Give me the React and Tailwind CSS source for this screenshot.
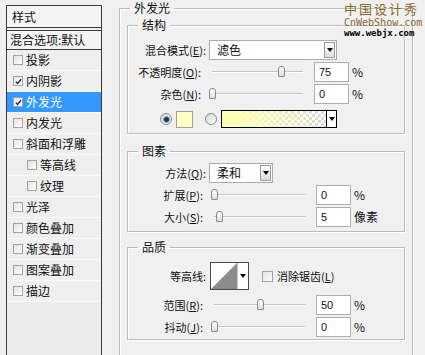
import React from "react";

const styles = [
  { label: "投影" },
  { label: "内阴影", checked: true },
  { label: "外发光", checked: true, selected: true },
  { label: "内发光" },
  { label: "斜面和浮雕" },
  { label: "等高线", sub: true },
  { label: "纹理", sub: true },
  { label: "光泽" },
  { label: "颜色叠加" },
  { label: "渐变叠加" },
  { label: "图案叠加" },
  { label: "描边" },
];

function Check({ checked, size = "h-[10px] w-[10px]" }) {
  return (
    <span className={`flex shrink-0 items-center justify-center border border-[#a2a2a2] bg-linear-to-br from-[#e2e2e2] to-white ${size}`}>
      {checked && (
        <svg viewBox="0 0 8 8" className="h-[7px] w-[7px]">
          <path d="M1 4.2 L3 6.3 L7 1.5" stroke="#1e2a5a" strokeWidth="1.6" fill="none" />
        </svg>
      )}
    </span>
  );
}

function Arrow() {
  return (
    <svg viewBox="0 0 6 4" className="h-[4px] w-[6px]">
      <path d="M0 0 H6 L3 4 Z" fill="#000" />
    </svg>
  );
}

function Select({ value, className }) {
  return (
    <div className={`flex h-[20px] items-center border border-[#a5acb5] bg-white ${className}`}>
      <span className="flex-1 pl-[7px] text-[12px] leading-none">{value}</span>
      <span className="mr-[1px] flex h-[16px] w-[11px] items-center justify-center border border-[#9a9a9a] bg-linear-to-b from-white to-[#dcdcdc]">
        <Arrow />
      </span>
    </div>
  );
}

function Slider({ pos }) {
  return (
    <div className="relative ml-[8px] flex h-[20px] w-[97px] items-center px-[3px]">
      <div className="h-[2px] flex-1 border-b border-white bg-[#c4c4c4]" />
      <span
        className="absolute top-[4px] h-[11px] w-[7px] rounded-t-[3px] rounded-b-[1px] border border-[#8a8a8a] bg-linear-to-b from-white to-[#dedede]"
        style={{ left: `${3 + pos * 92 - 3}px` }}
      />
    </div>
  );
}

function SliderRow({ label, value, unit = "%", pos, labelW = "w-[75px]", className = "" }) {
  return (
    <div className={`flex h-[20px] items-center ${className}`}>
      <span className={`${labelW} shrink-0 text-right text-[11px] leading-none`}>{label}</span>
      <Slider pos={pos} />
      <span className="ml-[8px] flex h-[20px] w-[35px] items-center border border-[#abadb3] bg-white pl-[4px] font-['Liberation_Sans',sans-serif] text-[11px]">
        {value}
      </span>
      <span className="ml-[3px] leading-none">{unit}</span>
    </div>
  );
}

function Radio({ on }) {
  return (
    <span className="flex h-[12px] w-[12px] shrink-0 items-center justify-center rounded-full border border-[#8a8a8a] bg-linear-to-br from-[#d6d6d6] to-white">
      {on && <span className="h-[7px] w-[7px] rounded-full border border-[#7fb0d0] bg-[#1f3f57]" />}
    </span>
  );
}

function Group({ title, className = "", children }) {
  return (
    <fieldset className={`border border-[#bcbcbc] shadow-[1px_1px_0_#fff,inset_1px_1px_0_#fff] ${className}`}>
      <legend className="ml-[10px] px-[4px] leading-[16px]">{title}</legend>
      {children}
    </fieldset>
  );
}

export default function App() {
  return (
    <div className="relative flex h-[355px] w-[425px] overflow-hidden bg-[#f0f0f0] font-['Noto_Sans_CJK_SC','Noto_Sans',sans-serif] text-[12px] text-[#111]">
      {/* styles list */}
      <div className="ml-[6px] mt-[5px] flex w-[96px] shrink-0 flex-col border-x border-[#3a3a3a]">
        <div className="flex h-[23px] items-center border-y border-[#3a3a3a] bg-[#f4f4f4] pl-[5px]">样式</div>
        <div className="mt-[2px] flex h-[20px] items-center border-y border-[#3a3a3a] bg-[#f4f4f4] pl-[3px]">混合选项:默认</div>
        {styles.map((s) => (
          <div
            key={s.label}
            className={`flex h-[21px] items-center border-b border-[#fafafa] ${s.sub ? "pl-[20px]" : "pl-[6px]"} ${s.selected ? "bg-[#3399ff] text-white" : "bg-[#efefef]"}`}
          >
            <Check checked={s.checked} />
            <span className="ml-[3px] leading-none">{s.label}</span>
          </div>
        ))}
        <div className="flex-1 bg-[#ececec]" />
      </div>

      {/* settings */}
      <Group title="外发光" className="ml-[17px] w-[294px] shrink-0 self-start">
        <div className="px-[7px] pb-[40px] pt-[1px]">
          <Group title="结构">
            <div className="flex flex-col pb-[5px] pt-[7px]">
              <div className="flex h-[20px] items-center">
                <span className="w-[78px] shrink-0 text-right text-[11px] leading-none">
                  混合模式(<span className="underline">E</span>):
                </span>
                <Select value="滤色" className="ml-[3px] w-[128px]" />
              </div>
              <SliderRow
                className="mt-[2px]"
                labelW="w-[73px]"
                label={<>不透明度(<span className="underline">O</span>):</>}
                value="75"
                pos={0.75}
              />
              <SliderRow
                className="mt-[2px]"
                labelW="w-[73px]"
                label={<>杂色(<span className="underline">N</span>):</>}
                value="0"
                pos={0}
              />
              <div className="mt-[6px] flex h-[18px] items-center pl-[32px]">
                <Radio on />
                <span className="ml-[4px] h-[17px] w-[17px] border border-[#a0a0a0] bg-[#ffffc0]" />
                <span className="ml-[12px]">
                  <Radio />
                </span>
                <div className="ml-[4px] flex h-[18px] w-[116px] border border-black">
                  <div className="flex-1 bg-[repeating-conic-gradient(#d9d9d9_0%_25%,#ffffff_0%_50%)] bg-[length:6px_6px]">
                    <div className="h-full w-full bg-linear-to-r from-[#ffffb4] from-10% to-transparent" />
                  </div>
                  <span className="flex w-[10px] items-center justify-center border-l border-black bg-white">
                    <Arrow />
                  </span>
                </div>
              </div>
            </div>
          </Group>

          <Group title="图素" className="mt-[9px]">
            <div className="flex flex-col pb-[4px] pt-[4px]">
              <div className="flex h-[20px] items-center">
                <span className="w-[78px] shrink-0 text-right text-[11px] leading-none">
                  方法(<span className="underline">Q</span>):
                </span>
                <Select value="柔和" className="ml-[3px] w-[64px]" />
              </div>
              <SliderRow className="mt-[2px]" label={<>扩展(<span className="underline">P</span>):</>} value="0" pos={0} />
              <SliderRow
                className="mt-[2px]"
                label={<>大小(<span className="underline">S</span>):</>}
                value="5"
                unit="像素"
                pos={0.05}
              />
            </div>
          </Group>

          <Group title="品质" className="mt-[7px]">
            <div className="flex flex-col pb-[2px] pt-[7px]">
              <div className="flex h-[28px] items-center">
                <span className="w-[78px] shrink-0 text-right text-[11px] leading-none">等高线:</span>
                <div className="ml-[4px] flex h-[28px] w-[39px] border border-[#4a4a4a] bg-white">
                  <svg viewBox="0 0 26 26" className="h-[26px] w-[26px]">
                    <path d="M0 26 L26 0 L26 26 Z" fill="#8c8c8c" />
                  </svg>
                  <span className="flex flex-1 items-center justify-center border-l border-[#c8c8c8]">
                    <Arrow />
                  </span>
                </div>
                <span className="ml-[13px]">
                  <Check size="h-[11px] w-[11px]" />
                </span>
                <span className="ml-[4px] text-[11px] leading-none">
                  消除锯齿(<span className="underline">L</span>)
                </span>
              </div>
              <SliderRow className="mt-[5px]" label={<>范围(<span className="underline">R</span>):</>} value="50" pos={0.5} />
              <SliderRow className="mt-[2px]" label={<>抖动(<span className="underline">J</span>):</>} value="0" pos={0} />
            </div>
          </Group>
        </div>
      </Group>

      {/* watermark */}
      <div className="pointer-events-none absolute left-[344px] top-[1px] flex flex-col">
        <span className="text-[13px] leading-[16px] tracking-[2px] text-[#8a6a2a]">中国设计秀</span>
        <span className="font-['DejaVu_Sans_Mono',monospace] text-[10px] leading-[11px] text-[#8a6a2a]">CnWebShow.com</span>
        <span className="font-['DejaVu_Sans_Mono',monospace] text-[9px] font-bold leading-[10px] text-black">www.webjx.com</span>
      </div>
    </div>
  );
}
